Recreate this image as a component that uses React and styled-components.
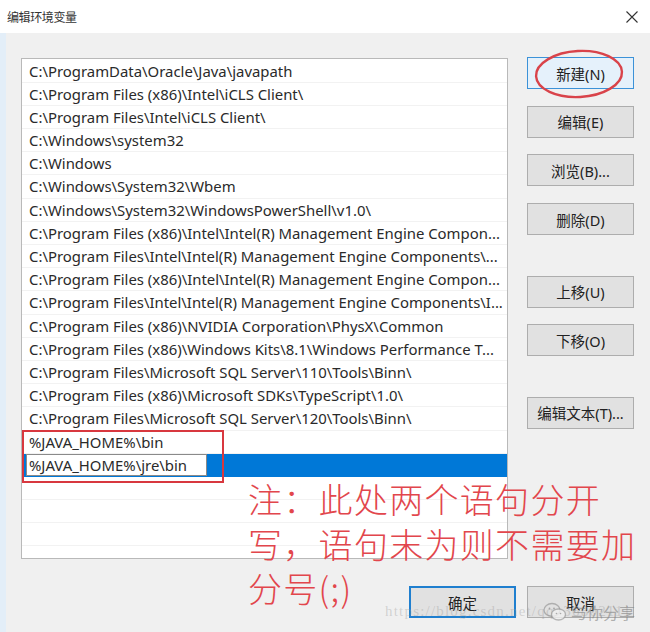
import React from "react";
import styled, { createGlobalStyle, css } from "styled-components";

const GlobalStyle = createGlobalStyle`
  html, body {
    margin: 0;
    padding: 0;
    background: #f0f0f0;
    overflow: hidden;
  }
`;

const UI_FONT = `"Noto Sans", "Noto Sans CJK SC", sans-serif`;
const CJK_FONT = `"Noto Sans CJK SC", "Noto Sans", sans-serif`;

const Dialog = styled.div`
  position: relative;
  width: 650px;
  height: 632px;
  display: flex;
  flex-direction: column;
  background: #f0f0f0;
  font-family: ${UI_FONT};
  color: #222;
  overflow: hidden;
`;

const TitleBar = styled.div`
  height: 33px;
  flex: none;
  display: flex;
  align-items: center;
  justify-content: space-between;
  padding: 0 12px 0 7px;
  background: #fff;
`;

const Title = styled.span`
  font-family: ${CJK_FONT};
  font-size: 12px;
  color: #333;
  letter-spacing: -0.4px;
`;

const CloseBtn = styled.svg`
  width: 12px;
  height: 12px;
`;

const Body = styled.div`
  flex: 1;
  display: flex;
  flex-direction: column;
  border-left: 6px solid #e3eef8;
  padding: 25px 16px 0 15px;
`;

const Main = styled.div`
  display: flex;
  gap: 19px;
`;

const ListBox = styled.div`
  width: 487px;
  height: 501px;
  box-sizing: border-box;
  border: 1px solid #b9b9b9;
  background: #fff;
  overflow: hidden;
  padding-top: 0.5px;
`;

const Row = styled.div`
  height: 23.2px;
  box-sizing: border-box;
  line-height: 22px;
  padding-left: 7px;
  border-bottom: 1px solid #f2f2f2;
  white-space: nowrap;
  overflow: hidden;
  font-size: 14.9px;
  color: #2a2a2a;
  ${(p) =>
    p.$selected &&
    css`
      background: #0078d7;
      padding-left: 4px;
      border-bottom-color: #0078d7;
    `}
`;

const EditBox = styled.div`
  display: inline-block;
  width: 181px;
  height: 100%;
  box-sizing: border-box;
  padding-left: 2px;
  background: #fff;
  border: 1px solid #8a8a8a;
  line-height: 21px;
`;

const ButtonColumn = styled.div`
  display: flex;
  flex-direction: column;
  gap: 40.5px;
  margin-top: -1px;
`;

const ButtonGroup = styled.div`
  display: flex;
  flex-direction: column;
  gap: 16.7px;
`;

const Button = styled.button`
  width: 107px;
  height: 32px;
  box-sizing: border-box;
  padding: 0;
  background: #e1e1e1;
  border: 1px solid #adadad;
  font-family: ${UI_FONT};
  font-size: 14.5px;
  color: #222;
  ${(p) =>
    p.$variant === "hover" &&
    css`
      background: #e5f1fb;
      border-color: #3c92d8;
    `}
  ${(p) =>
    p.$variant === "default" &&
    css`
      border: 2px solid #1f7fcf;
    `}
`;

const Footer = styled.div`
  display: flex;
  justify-content: flex-end;
  gap: 11px;
  margin-top: 27px;
`;

const RedBox = styled.div`
  position: absolute;
  left: 22px;
  top: 430px;
  width: 202px;
  height: 53px;
  box-sizing: border-box;
  border: 2px solid #d8383f;
  pointer-events: none;
`;

const Ellipse = styled.svg`
  position: absolute;
  left: 533px;
  top: 48px;
  width: 92px;
  height: 52px;
  overflow: visible;
  pointer-events: none;
`;

const Note = styled.div`
  position: absolute;
  left: 248px;
  top: 477px;
  font-family: ${CJK_FONT};
  font-weight: 300;
  font-size: 34px;
  line-height: 44.5px;
  letter-spacing: 1.3px;
  color: #e2464c;
  pointer-events: none;
  white-space: nowrap;
`;

const Watermark = styled.div`
  position: absolute;
  left: 385px;
  top: 603px;
  font-family: "Liberation Serif", serif;
  font-size: 15px;
  letter-spacing: 1.2px;
  color: rgba(150, 150, 150, 0.35);
  pointer-events: none;
  white-space: nowrap;
`;

const Brand = styled.div`
  position: absolute;
  left: 543px;
  top: 600px;
  display: flex;
  align-items: center;
  gap: 4px;
  font-family: ${CJK_FONT};
  font-size: 16px;
  color: rgba(130, 130, 130, 0.6);
  pointer-events: none;
`;

const paths = [
  "C:\\ProgramData\\Oracle\\Java\\javapath",
  "C:\\Program Files (x86)\\Intel\\iCLS Client\\",
  "C:\\Program Files\\Intel\\iCLS Client\\",
  "C:\\Windows\\system32",
  "C:\\Windows",
  "C:\\Windows\\System32\\Wbem",
  "C:\\Windows\\System32\\WindowsPowerShell\\v1.0\\",
  "C:\\Program Files (x86)\\Intel\\Intel(R) Management Engine Compon...",
  "C:\\Program Files\\Intel\\Intel(R) Management Engine Components\\...",
  "C:\\Program Files (x86)\\Intel\\Intel(R) Management Engine Compon...",
  "C:\\Program Files\\Intel\\Intel(R) Management Engine Components\\I...",
  "C:\\Program Files (x86)\\NVIDIA Corporation\\PhysX\\Common",
  "C:\\Program Files (x86)\\Windows Kits\\8.1\\Windows Performance T...",
  "C:\\Program Files\\Microsoft SQL Server\\110\\Tools\\Binn\\",
  "C:\\Program Files (x86)\\Microsoft SDKs\\TypeScript\\1.0\\",
  "C:\\Program Files\\Microsoft SQL Server\\120\\Tools\\Binn\\",
  "%JAVA_HOME%\\bin",
];

export default function App() {
  return (
    <>
      <GlobalStyle />
      <Dialog>
        <TitleBar>
          <Title>编辑环境变量</Title>
          <CloseBtn viewBox="0 0 12 12">
            <path d="M0.5 0.5 L11.5 11.5 M11.5 0.5 L0.5 11.5" stroke="#333" strokeWidth="1.1" />
          </CloseBtn>
        </TitleBar>
        <Body>
          <Main>
            <ListBox>
              {paths.map((p, i) => (
                <Row key={i}>{p}</Row>
              ))}
              <Row $selected>
                <EditBox>%JAVA_HOME%\jre\bin</EditBox>
              </Row>
              <Row />
              <Row />
              <Row />
              <Row />
            </ListBox>
            <ButtonColumn>
              <ButtonGroup>
                <Button $variant="hover">新建(N)</Button>
                <Button>编辑(E)</Button>
                <Button>浏览(B)...</Button>
                <Button>删除(D)</Button>
              </ButtonGroup>
              <ButtonGroup>
                <Button>上移(U)</Button>
                <Button>下移(O)</Button>
              </ButtonGroup>
              <ButtonGroup>
                <Button>编辑文本(T)...</Button>
              </ButtonGroup>
            </ButtonColumn>
          </Main>
          <Footer>
            <Button $variant="default">确定</Button>
            <Button>取消</Button>
          </Footer>
        </Body>

        <RedBox />
        <Ellipse viewBox="0 0 92 52">
          <ellipse cx="46" cy="26" rx="43" ry="23" fill="none" stroke="#d9434a" strokeWidth="2.4" transform="rotate(-3 46 26)" />
        </Ellipse>
        <Note>
          注：此处两个语句分开
          <br />
          写，语句末为则不需要加
          <br />
          分号(;)
        </Note>
        <Watermark>https://blog.csdn.net/qq_36802111</Watermark>
        <Brand>
          <svg width="24" height="20" viewBox="0 0 24 20">
            <ellipse cx="9" cy="8" rx="8" ry="6.5" fill="none" stroke="rgba(140,140,140,0.6)" strokeWidth="1.3" />
            <ellipse cx="15.5" cy="12.5" rx="7" ry="5.5" fill="rgba(240,240,240,0.8)" stroke="rgba(140,140,140,0.6)" strokeWidth="1.3" />
            <circle cx="6.5" cy="6.5" r="0.9" fill="rgba(140,140,140,0.7)" />
            <circle cx="11" cy="6.5" r="0.9" fill="rgba(140,140,140,0.7)" />
            <circle cx="13.5" cy="11.5" r="0.8" fill="rgba(140,140,140,0.7)" />
            <circle cx="17.5" cy="11.5" r="0.8" fill="rgba(140,140,140,0.7)" />
          </svg>
          <span>与你分享</span>
        </Brand>
      </Dialog>
    </>
  );
}
